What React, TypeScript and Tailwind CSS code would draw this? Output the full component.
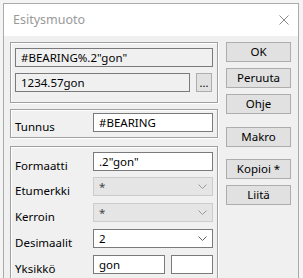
import { ReactNode } from "react";

const font = { fontFamily: '"Noto Sans", "Open Sans", sans-serif' };

function Chevron({ color = "#606060" }: { color?: string }) {
  return (
    <svg width="9" height="5" viewBox="0 0 9 5" className="shrink-0">
      <path d="M0.5 0.5 L4.5 4.5 L8.5 0.5" fill="none" stroke={color} strokeWidth="1" />
    </svg>
  );
}

function Btn({ children, className = "" }: { children: ReactNode; className?: string }) {
  return (
    <div
      className={`flex h-[20px] w-[65px] items-center justify-center border border-[#adadad] bg-[#e1e1e1] text-[11.5px] text-black ${className}`}
    >
      {children}
    </div>
  );
}

function Group({ children, className = "" }: { children: ReactNode; className?: string }) {
  return (
    <div className={`border border-[#a0a0a0] shadow-[inset_1px_1px_0_#ffffff,1px_1px_0_#ffffff] ${className}`}>
      {children}
    </div>
  );
}

function Row({ label, children, className = "" }: { label: string; children: ReactNode; className?: string }) {
  return (
    <div className={`flex h-[19px] items-start ${className}`}>
      <div className="w-[78px] pt-[4px] text-[11.5px] leading-[19px] text-black">{label}</div>
      {children}
    </div>
  );
}

function Select({ value, disabled }: { value: string; disabled?: boolean }) {
  return (
    <div
      className={`flex h-[19px] w-[120px] items-center justify-between pl-[5px] pr-[5px] text-[11.5px] ${
        disabled ? "border border-[#cccccc] bg-[#e5e5e5] text-[#444444]" : "border border-[#7a7a7a] bg-white text-black"
      }`}
    >
      <span className="leading-none">{value}</span>
      <Chevron color={disabled ? "#9a9a9a" : "#606060"} />
    </div>
  );
}

export default function App() {
  return (
    <div className="h-[278px] w-[303px] overflow-hidden bg-[#f4f4f4]" style={font}>
      <div className="ml-[3px] mt-[3px] w-[296px] border border-[#aaaaaa] bg-[#f0f0f0]">
        {/* Title bar */}
        <div className="flex h-[32px] items-center justify-between bg-white pl-[9px] pr-[9px]">
          <span className="text-[12.5px] text-[#999999]">Esitysmuoto</span>
          <svg width="10" height="10" viewBox="0 0 10 10">
            <path d="M0.5 0.5 L9.5 9.5 M9.5 0.5 L0.5 9.5" stroke="#8a8a8a" strokeWidth="1" />
          </svg>
        </div>

        <div className="flex gap-[8px] pl-[6px] pt-[6px]">
          {/* Left column */}
          <div className="flex w-[208px] flex-col">
            <Group className="px-[4px] pb-[10px] pt-[5px]">
              <div className="flex h-[19px] items-center border border-[#7a7a7a] bg-[#f0f0f0] pl-[5px] text-[11.5px] text-black">
                #BEARING%.2"gon"
              </div>
              <div className="mt-[6px] flex gap-[6px]">
                <div className="flex h-[19px] w-[175px] items-center border border-[#7a7a7a] bg-[#f0f0f0] pl-[5px] text-[11.5px] text-black">
                  1234.57gon
                </div>
                <div className="flex h-[19px] w-[16px] items-end justify-center border border-[#adadad] bg-[#e1e1e1] pb-[3px] text-[11px] leading-none text-black">
                  ...
                </div>
              </div>
            </Group>

            <Group className="mt-[6px] pb-[5px] pl-[4px] pr-[4px] pt-[3px]">
              <Row label="Tunnus" className="h-[19px]">
                <div className="flex h-[19px] w-[120px] items-center border border-[#7a7a7a] bg-white pl-[5px] text-[11.5px] text-black">
                  #BEARING
                </div>
              </Row>
            </Group>

            <Group className="mt-[8px] h-[140px] px-[4px] pt-[5px]">
              <Row label="Formaatti">
                <div className="flex h-[19px] w-[120px] items-center border border-[#7a7a7a] bg-white pl-[5px] text-[11.5px] text-black">
                  .2"gon"
                </div>
              </Row>
              <Row label="Etumerkki" className="mt-[6px]">
                <Select value="*" disabled />
              </Row>
              <Row label="Kerroin" className="mt-[7px]">
                <Select value="*" disabled />
              </Row>
              <Row label="Desimaalit" className="mt-[7px]">
                <Select value="2" />
              </Row>
              <Row label="Yksikkö" className="mt-[7px]">
                <div className="flex h-[19px] w-[72px] items-center border border-[#7a7a7a] bg-white pl-[5px] text-[11.5px] text-black">
                  gon
                </div>
                <div className="ml-[6px] h-[19px] w-[42px] border border-[#7a7a7a] bg-white" />
              </Row>
            </Group>
          </div>

          {/* Right column */}
          <div className="flex flex-col">
            <Btn>OK</Btn>
            <Btn className="mt-[6px]">Peruuta</Btn>
            <Btn className="mt-[6px]">Ohje</Btn>
            <Btn className="mt-[13px]">Makro</Btn>
            <Btn className="mt-[12px]">Kopioi *</Btn>
            <Btn className="mt-[6px]">Liitä</Btn>
          </div>
        </div>
      </div>
    </div>
  );
}
